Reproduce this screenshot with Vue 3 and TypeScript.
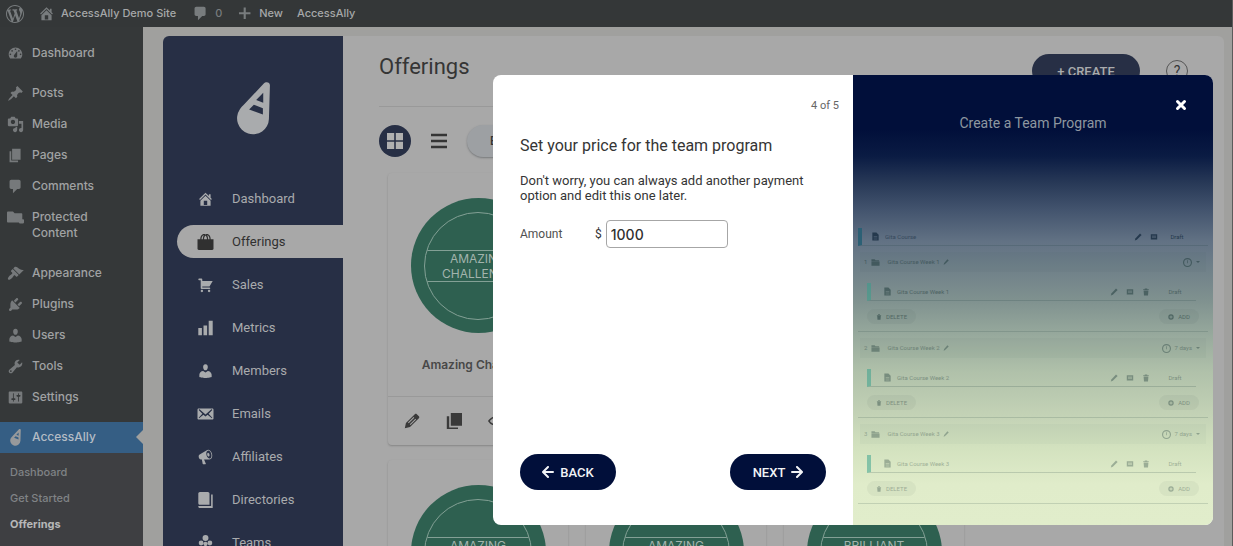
<script setup lang="ts">
import { ref } from 'vue'

interface MenuItem {
  label: string
  icon: string
  gap?: boolean
}

interface Week {
  order: number
  title: string
  delay: string
  strength: number
}

const icons: Record<string, string> = {
  wordpress:
    'M20 10c0-5.51-4.49-10-10-10C4.48 0 0 4.49 0 10c0 5.52 4.48 10 10 10 5.51 0 10-4.48 10-10zM7.78 15.37L4.37 6.22c.55-.02 1.17-.08 1.17-.08.5-.06.44-1.13-.06-1.11 0 0-1.45.11-2.37.11-.18 0-.37 0-.58-.01C4.12 2.69 6.87 1.11 10 1.11c2.33 0 4.45.87 6.05 2.34-.68-.11-1.65.39-1.65 1.58 0 .74.45 1.36.9 2.1.35.61.55 1.36.55 2.46 0 1.49-1.4 5-1.4 5l-3.03-8.37c.54-.02.82-.17.82-.17.5-.05.44-1.25-.06-1.22 0 0-1.44.12-2.38.12-.87 0-2.33-.12-2.33-.12-.5-.03-.56 1.2-.06 1.22l.92.08 1.26 3.41zM17.41 10c.24-.64.74-1.87.43-4.25.7 1.29 1.05 2.71 1.05 4.25 0 3.29-1.73 6.24-4.4 7.78.97-2.59 1.94-5.2 2.92-7.78zM6.1 18.09C3.12 16.65 1.11 13.53 1.11 10c0-1.3.23-2.48.72-3.59C3.25 10.3 4.67 14.2 6.1 18.09zm4.03-6.63l2.58 6.98c-.86.29-1.76.45-2.71.45-.79 0-1.57-.11-2.29-.33.81-2.38 1.62-4.74 2.42-7.1z',
  home: 'M16 8.5l1.53 1.53-1.06 1.06L10 4.6l-6.47 6.49-1.06-1.06L10 2.5l4 4v-2h2v4zm-6-2.46l6 5.99V18H4v-5.97zM12 17v-5H8v5h4z',
  comment: 'M5 2h9c1.1 0 2 .9 2 2v7c0 1.1-.9 2-2 2h-2l-5 5v-5H5c-1.1 0-2-.9-2-2V4c0-1.1.9-2 2-2z',
  plus: 'M17 8.500v2.500h-5.500v5.500H9V11H3.500V8.500H9V3h2.500v5.500z',
  dashboard:
    'M3.76 16h12.48c1.1-1.37 1.76-3.11 1.76-5 0-4.42-3.58-8-8-8s-8 3.58-8 8c0 1.89.66 3.63 1.76 5zM10 4c.55 0 1 .45 1 1s-.45 1-1 1-1-.45-1-1 .45-1 1-1zM6 6c.55 0 1 .45 1 1s-.45 1-1 1-1-.45-1-1 .45-1 1-1zm8 0c.55 0 1 .45 1 1s-.45 1-1 1-1-.45-1-1 .45-1 1-1zm-5.37 5.55L12 7v6c0 1.1-.9 2-2 2s-2-.9-2-2c0-.57.24-1.08.63-1.45zM4 10c.55 0 1 .45 1 1s-.45 1-1 1-1-.45-1-1 .45-1 1-1zm12 0c.55 0 1 .45 1 1s-.45 1-1 1-1-.45-1-1 .45-1 1-1z',
  pin: 'M10.44 3.02l1.82-1.82 6.36 6.35-1.83 1.82c-1.05-.68-2.48-.57-3.41.36l-.75.75c-.92.93-1.04 2.35-.35 3.41l-1.83 1.82-2.41-2.41-2.8 2.79c-.42.42-3.38 2.71-3.8 2.29s1.86-3.39 2.28-3.81l2.79-2.79L4.1 9.36l1.83-1.82c1.05.69 2.48.57 3.4-.36l.75-.75c.93-.92 1.05-2.35.36-3.41z',
  media:
    'M13 11V4c0-.55-.45-1-1-1h-1.67L9 1H5L3.67 3H2c-.55 0-1 .45-1 1v7c0 .55.45 1 1 1h10c.55 0 1-.45 1-1zM7 4.5c1.38 0 2.500 1.12 2.500 2.500S8.38 9.500 7 9.500 4.500 8.38 4.500 7 5.62 4.500 7 4.500zM14 6h5v10.500c0 1.38-1.12 2.500-2.500 2.500S14 17.88 14 16.500s1.12-2.500 2.500-2.500c.17 0 .34.02.5.05V9h-3V6zm-4 8.05V13h2v3.500c0 1.38-1.12 2.500-2.500 2.500S7 17.88 7 16.500 8.12 14 9.500 14c.17 0 .34.02.5.05z',
  pages: 'M6 15V2h10v13H6zm-1 1h8v2H3V5h2v11z',
  folder: 'M0 4c0-.6.4-1 1-1h6l2 2h8c.6 0 1 .4 1 1v6h1c.6 0 1 .4 1 1v3c0 .6-.4 1-1 1h-4c-.6 0-1-.4-1-1H1c-.6 0-1-.4-1-1z',
  brush:
    'M14.48 11.06L7.41 3.99l1.5-1.5c.5-.56 2.3-.47 3.51.32 1.21.8 1.43 1.28 2.91 2.1 1.18.64 2.45 1.26 4.45.85zm-.71.71L6.7 4.7 4.93 6.47c-.39.39-.39 1.02 0 1.41l1.06 1.06c.39.39.39 1.03 0 1.42-.6.6-1.43 1.11-2.21 1.69-.35.26-.7.53-1.01.84C1.43 14.23.4 16.08 1.4 17.07c.99 1 2.84-.03 4.18-1.36.31-.31.58-.66.85-1.02.57-.78 1.08-1.61 1.69-2.21.39-.39 1.02-.39 1.41 0l1.06 1.06c.39.39 1.02.39 1.41 0z',
  plug: 'M13.11 4.36L9.87 7.6 8 5.73l3.24-3.24c.35-.34 1.05-.2 1.56.32.52.51.66 1.21.31 1.55zm-8 1.77l.91-1.12 9.01 9.01-1.19.84c-.71.71-2.63 1.16-3.82 1.16H6.14L4.9 17.26c-.59.59-1.54.59-2.12 0-.59-.58-.59-1.53 0-2.12l1.24-1.24v-3.88c0-1.13.4-3.19 1.09-3.89zm7.26 3.97l3.24-3.24c.34-.35 1.04-.21 1.55.31.52.51.66 1.21.31 1.55l-3.24 3.25z',
  user: 'M10 9.25c-2.27 0-2.73-3.44-2.73-3.44C7 4.02 7.82 2 9.97 2c2.16 0 2.98 2.02 2.71 3.81 0 0-.41 3.44-2.68 3.44zm0 2.57L12.72 10c2.39 0 4.52 2.33 4.52 4.53v2.49s-3.65 1.13-7.24 1.13c-3.65 0-7.24-1.13-7.24-1.13v-2.49c0-2.25 1.94-4.48 4.47-4.48z',
  wrench:
    'M16.68 9.77c-1.34 1.34-3.3 1.67-4.95.99l-5.41 6.52c-.99.99-2.59.99-3.58 0s-.99-2.59 0-3.57l6.52-5.42c-.68-1.65-.35-3.61.99-4.95 1.28-1.28 3.12-1.62 4.72-1.06l-2.89 2.89 2.82 2.82 2.86-2.87c.53 1.58.18 3.39-1.08 4.65zM3.81 16.21c.4.39 1.04.39 1.43 0 .4-.4.4-1.04 0-1.43-.39-.4-1.03-.4-1.43 0-.39.39-.39 1.03 0 1.43z',
  settings:
    'M18 16V4c0-.55-.45-1-1-1H3c-.55 0-1 .45-1 1v12c0 .55.45 1 1 1h14c.55 0 1-.45 1-1zM8 11h1c.55 0 1 .45 1 1s-.45 1-1 1H8v1.5c0 .28-.22.5-.5.5s-.5-.22-.5-.5V13H6c-.55 0-1-.45-1-1s.45-1 1-1h1V5.5c0-.28.22-.5.5-.5s.5.22.5.5V11zm5-2h-1c-.55 0-1-.45-1-1s.45-1 1-1h1V5.5c0-.28.22-.5.5-.5s.5.22.5.5V7h1c.55 0 1 .45 1 1s-.45 1-1 1h-1v5.5c0 .28-.22.5-.5.5s-.5-.22-.5-.5V9z',
  bag: 'M0 6.500h3.500C3.500 3 5.500 0 8 0c.8 0 1.500.2 2 .6.5-.4 1.200-.6 2-.6 2.500 0 4.500 3 4.500 6.500H20v12c0 .8-.7 1.500-1.500 1.500h-17C.7 20 0 19.300 0 18.500zM5 6.500h1.700c0-2 .5-3.800 1.300-5C6.300 1.500 5 3.700 5 6.500zm3.200 0h3.600c0-1.900-.7-3.600-1.800-4.500-1.100.9-1.800 2.600-1.800 4.500zm5.100 0H15c0-2.800-1.300-5-3-5 .8 1.200 1.300 3 1.300 5z',
  cart: 'M6 13h9c.55 0 1 .45 1 1s-.45 1-1 1H5c-.55 0-1-.45-1-1V4H2c-.55 0-1-.45-1-1s.45-1 1-1h3c.55 0 1 .45 1 1v2h13l-4 7H6v1zm-.5 3c.83 0 1.5.67 1.5 1.5S6.33 19 5.500 19 4 18.33 4 17.5 4.67 16 5.500 16zm9 0c.83 0 1.5.67 1.5 1.5s-.67 1.5-1.5 1.5-1.5-.67-1.5-1.5.67-1.5 1.5-1.5z',
  bars: 'M19 19V1h-5v18h5zm-7 0V7H7.500v12H12zm-6.500 0v-9H1v9h4.500z',
  mail: 'M20 15.500v-11c0-.83-.67-1.500-1.500-1.500h-17C.670 3 0 3.670 0 4.500v11c0 .83.67 1.500 1.500 1.500h17c.83 0 1.500-.67 1.500-1.500zM18.200 4.400c.4.4.2.8 0 1L13.900 9.700l4.300 4.600c.2.200.2.500.1.700-.2.200-.5.200-.7.100L12.600 11 10 13l-2.600-2-5 4.100c-.2.100-.5.100-.7-.1-.1-.2-.1-.5.1-.7l4.300-4.600L1.800 5.400c-.2-.2-.4-.6 0-1s.8-.2 1.100.1L10 10.500l7.100-6c.3-.3.7-.5 1.100-.1z',
  megaphone:
    'M18.15 5.94c.46 1.62.38 3.22-.02 4.48-.42 1.28-1.26 2.18-2.3 2.48-.16.06-.26.06-.4.06-.06.02-.12.02-.18.02-.06.02-.14.02-.22.02h-6.8l2.22 5.5c.02.14-.06.26-.14.34-.08.1-.24.16-.34.16H6.95c-.1 0-.26-.06-.34-.16-.08-.08-.16-.2-.14-.34l-1-5.5H4.25l-.02-.02c-.5.06-1.08-.18-1.54-.62s-.88-1.08-1.06-1.88c-.24-.8-.2-1.56-.02-2.2.18-.62.58-1.08 1.06-1.3l.02-.02 9-5.4c.1-.06.18-.1.24-.16.06-.04.14-.08.24-.12.16-.08.28-.12.5-.18 1.04-.3 2.24.1 3.22.98s1.84 2.24 2.26 3.86zm-2.58 5.98h-.02c.4-.1.74-.34 1.04-.7.58-.7.86-1.76.86-3.04 0-.64-.1-1.3-.28-1.98-.34-1.36-1.02-2.5-1.78-3.24s-1.68-1.1-2.46-.88c-.82.22-1.4.96-1.7 2-.32 1.04-.28 2.36.06 3.72.38 1.36 1 2.5 1.8 3.24.78.74 1.62 1.1 2.48.88zm-2.54-7.08c.22-.04.42-.02.62.04.38.16.76.48 1.02 1s.42 1.2.42 1.78c0 .3-.04.56-.12.8-.18.48-.44.84-.86.94-.34.1-.8-.06-1.14-.4s-.64-.86-.78-1.5c-.18-.62-.12-1.24.02-1.72s.48-.84.82-.94z',
  book: 'M3 0h10c1.100 0 2 .9 2 2v14H3c-1.100 0-2-.9-2-2V2c0-1.100.9-2 2-2zM17 3h2v17H3c-1.100 0-2-.9-2-2v-.500h16z',
  team: 'M10 0a3.700 3.700 0 1 1 0 7.400A3.700 3.700 0 0 1 10 0zM4.500 7a3 3 0 1 1 0 6 3 3 0 0 1 0-6zm11 0a3 3 0 1 1 0 6 3 3 0 0 1 0-6zM10 8.500c1.500 0 2.500 1 2.500 2.500S11.500 14 10 14s-2.500-1.500-2.500-3S8.500 8.500 10 8.500zM0 19c0-3 1.500-5 4.500-5s4.500 2 4.500 5zm11 0c0-3 1.500-5 4.500-5s4.500 2 4.500 5z',
  pencil:
    'M13.500 1.500c.7-.7 1.800-.7 2.500 0l2.600 2.600c.7.7.7 1.800 0 2.500L7.500 17.600 1 19l1.400-6.500zM12 5L5 12l.9.900 7-7zm2.200 2.200l-7 7 .9.900 7-7z',
  copy: 'M6 0h14v16H6zM1 4h3v14h11v2H1z',
  eye: 'M10 4C5 4 1.500 7.500 0 10c1.500 2.500 5 6 10 6s8.500-3.500 10-6c-1.500-2.500-5-6-10-6zm0 1.800c3.500 0 6.200 2.200 7.700 4.200-1.500 2-4.200 4.200-7.700 4.200S3.800 12 2.300 10C3.800 8 6.500 5.800 10 5.800zM10 7a3 3 0 1 1 0 6 3 3 0 0 1 0-6z',
  trash: 'M7 1h6v2h4v2H3V3h4zM4 6h12l-1 13H5z',
  doc: 'M3 1h9l5 5v13H3zM6 9v1h8V9zm0 3v1h8v-1zm0 3v1h8v-1z',
  card: 'M2 3h16v13H2zM5 7v1.500h10V7zm0 4v1.500h10V11z',
  pen: 'M15 1l4 4L7 17l-5 2 2-6z',
  files: 'M1 3h7l2 2h8v2H1zM1 8h18v9H1z',
  clock: 'M10 0a10 10 0 1 0 0 20 10 10 0 0 0 0-20zm0 2.500a7.500 7.500 0 1 1 0 15 7.500 7.500 0 0 1 0-15zM9.200 5v6.500h1.600V5z',
  add: 'M10 1a9 9 0 1 0 0 18 9 9 0 0 0 0-18zM8.500 5h3v3.500H15v3h-3.500V15h-3v-3.500H5v-3h3.500z',
  grid: 'M0 0h9v9H0zM11 0h9v9h-9zM0 11h9v9H0zM11 11h9v9h-9z',
  list: 'M0 1h20v3H0zM0 8.500h20v3H0zM0 16h20v3H0z'
}

const logoPath =
  'M79 5C86-2 98 0 98 10L95 110A47.500 47.500 0 1 1 8 82C12 76 16 72 20 68ZM78 32V62L57 54ZM50 68L77 78V97L36 82Z'

const adminMenu: MenuItem[] = [
  { label: 'Dashboard', icon: 'dashboard' },
  { label: 'Posts', icon: 'pin', gap: true },
  { label: 'Media', icon: 'media' },
  { label: 'Pages', icon: 'pages' },
  { label: 'Comments', icon: 'comment' },
  { label: 'Protected Content', icon: 'folder' },
  { label: 'Appearance', icon: 'brush', gap: true },
  { label: 'Plugins', icon: 'plug' },
  { label: 'Users', icon: 'user' },
  { label: 'Tools', icon: 'wrench' },
  { label: 'Settings', icon: 'settings' }
]

const subMenu = ['Dashboard', 'Get Started', 'Offerings', 'Sales']

const appMenu: MenuItem[] = [
  { label: 'Dashboard', icon: 'home' },
  { label: 'Offerings', icon: 'bag' },
  { label: 'Sales', icon: 'cart' },
  { label: 'Metrics', icon: 'bars' },
  { label: 'Members', icon: 'user' },
  { label: 'Emails', icon: 'mail' },
  { label: 'Affiliates', icon: 'megaphone' },
  { label: 'Directories', icon: 'book' },
  { label: 'Teams', icon: 'team' }
]

const offerings = [
  ['Amazing', 'Challenge'],
  ['Amazing', 'Course'],
  ['Amazing', 'Program'],
  ['Brilliant', 'Course'],
  ['Amazing', 'Team'],
  ['Amazing', 'Retreat'],
  ['Brilliant', 'Program']
]

const weeks: Week[] = [
  { order: 1, title: 'Gita Course Week 1', delay: '', strength: 0.5 },
  { order: 2, title: 'Gita Course Week 2', delay: '7 days', strength: 0.38 },
  { order: 3, title: 'Gita Course Week 3', delay: '7 days', strength: 0.32 }
]

const cardActions = [
  { label: 'Edit', icon: 'pencil' },
  { label: 'Duplicate', icon: 'copy' },
  { label: 'Preview', icon: 'eye' },
  { label: 'Delete', icon: 'trash' }
]

const amount = ref('1000')
</script>

<template>
  <div class="page">
    <header class="topbar">
      <a href="#" class="wp" aria-label="WordPress"><svg class="i18" viewBox="0 0 20 20"><path :d="icons.wordpress" /></svg></a>
      <a href="#" class="site"><svg class="i17" viewBox="0 0 20 20"><path :d="icons.home" /></svg>AccessAlly Demo Site</a>
      <a href="#" class="count"><svg class="i17" viewBox="0 0 20 20"><path :d="icons.comment" /></svg>0</a>
      <a href="#" class="new"><svg class="i17" viewBox="0 0 20 20"><path :d="icons.plus" /></svg>New</a>
      <a href="#">AccessAlly</a>
    </header>

    <div class="body">
      <nav class="admin" aria-label="Admin menu">
        <a v-for="item in adminMenu" :key="item.label" href="#" class="admin-item" :class="{ gap: item.gap }">
          <svg class="i17" viewBox="0 0 20 20" fill-rule="evenodd"><path :d="icons[item.icon]" /></svg>
          <span>{{ item.label }}</span>
        </a>
        <a href="#" class="admin-item current gap">
          <svg class="i17" viewBox="0 0 98 158" fill-rule="evenodd"><path :d="logoPath" /></svg>
          <span>AccessAlly</span>
        </a>
        <div class="sub">
          <a v-for="item in subMenu" :key="item" href="#" :class="{ on: item === 'Offerings' }">{{ item }}</a>
        </div>
      </nav>

      <div class="app">
        <nav class="side" aria-label="AccessAlly">
          <svg class="logo" viewBox="0 0 98 158" fill-rule="evenodd"><path :d="logoPath" /></svg>
          <a v-for="item in appMenu" :key="item.label" href="#" class="side-item" :class="{ on: item.label === 'Offerings' }">
            <svg :class="item.icon === 'home' || item.icon === 'user' ? 'i18' : 'i16'" viewBox="0 0 20 20" fill-rule="evenodd"><path :d="icons[item.icon]" /></svg>
            <span>{{ item.label }}</span>
          </a>
        </nav>

        <main class="content">
          <div class="head">
            <h1>Offerings</h1>
            <button type="button" class="create">+ CREATE</button>
            <button type="button" class="help" aria-label="Help">?</button>
          </div>
          <div class="tools">
            <button type="button" class="view-grid" aria-label="Grid view"><svg class="i16" viewBox="0 0 20 20"><path :d="icons.grid" /></svg></button>
            <button type="button" class="view-list" aria-label="List view"><svg class="i16" viewBox="0 0 20 20"><path :d="icons.list" /></svg></button>
            <button type="button" class="filter">EDIT</button>
          </div>
          <div class="cards">
            <article v-for="offer in offerings" :key="offer.join()" class="card">
              <div class="badge">
                <div class="ring"><span>{{ offer[0].toUpperCase() }}<br />{{ offer[1].toUpperCase() }}</span></div>
              </div>
              <h2>{{ offer.join(' ') }}</h2>
              <footer>
                <button v-for="action in cardActions" :key="action.label" type="button" :aria-label="action.label">
                  <svg class="i16" viewBox="0 0 20 20" fill-rule="evenodd"><path :d="icons[action.icon]" /></svg>
                </button>
              </footer>
            </article>
          </div>
        </main>
      </div>
    </div>

    <div class="overlay">
      <section class="modal" role="dialog" aria-labelledby="step-title">
        <form class="step" @submit.prevent>
          <p class="progress">4 of 5</p>
          <h2 id="step-title">Set your price for the team program</h2>
          <p class="hint">Don't worry, you can always add another payment option and edit this one later.</p>
          <div class="field">
            <label for="amount">Amount</label>
            <span class="unit">$</span>
            <input id="amount" v-model="amount" type="text" inputmode="decimal" />
          </div>
          <div class="actions">
            <button type="button">
              <svg class="arrow" viewBox="0 0 12 12"><path d="M6 1L1 6l5 5M1.500 6H11" /></svg>BACK
            </button>
            <button type="submit">
              NEXT<svg class="arrow" viewBox="0 0 12 12"><path d="M6 1l5 5-5 5M10.500 6H1" /></svg>
            </button>
          </div>
        </form>

        <aside class="preview">
          <button type="button" class="close" aria-label="Close">
            <svg viewBox="0 0 12 12"><path d="M2.500 2.500l7 7M9.500 2.500l-7 7" /></svg>
          </button>
          <h3>Create a Team Program</h3>
          <div class="outline">
            <div class="row course">
              <svg class="i9" viewBox="0 0 20 20"><path :d="icons.doc" /></svg>
              <span class="name">Gita Course</span>
              <svg class="i8" viewBox="0 0 20 20"><path :d="icons.pen" /></svg>
              <svg class="i8" viewBox="0 0 20 20" fill-rule="evenodd"><path :d="icons.card" /></svg>
              <span class="state">Draft</span>
            </div>
            <div v-for="week in weeks" :key="week.order" class="week">
              <div class="week-head">
                <span class="ink" :style="{ opacity: week.strength }">
                  <span>{{ week.order }}</span>
                  <svg class="i9" viewBox="0 0 20 20"><path :d="icons.files" /></svg>
                  <span class="name">{{ week.title }} <svg class="i6" viewBox="0 0 20 20"><path :d="icons.pen" /></svg></span>
                  <svg class="i9" viewBox="0 0 20 20" fill-rule="evenodd"><path :d="icons.clock" /></svg>
                  <span v-if="week.delay">{{ week.delay }}</span>
                  <i class="caret"></i>
                </span>
              </div>
              <div class="row lesson">
                <span class="ink" :style="{ opacity: week.strength }">
                  <svg class="i9" viewBox="0 0 20 20" fill-rule="evenodd"><path :d="icons.doc" /></svg>
                  <span class="name">{{ week.title }}</span>
                  <svg class="i8" viewBox="0 0 20 20"><path :d="icons.pen" /></svg>
                  <svg class="i8" viewBox="0 0 20 20" fill-rule="evenodd"><path :d="icons.card" /></svg>
                  <svg class="i8" viewBox="0 0 20 20"><path :d="icons.trash" /></svg>
                  <span class="state">Draft</span>
                </span>
              </div>
              <div class="week-foot">
                <span class="chip"><span class="ink" :style="{ opacity: week.strength }"><svg class="i6" viewBox="0 0 20 20"><path :d="icons.trash" /></svg>DELETE</span></span>
                <span class="chip"><span class="ink" :style="{ opacity: week.strength }"><svg class="i6" viewBox="0 0 20 20" fill-rule="evenodd"><path :d="icons.add" /></svg>ADD</span></span>
              </div>
            </div>
          </div>
        </aside>
      </section>
    </div>
  </div>
</template>

<style>
body {
  margin: 0;
}
</style>

<style scoped>
.page,
.page * {
  box-sizing: border-box;
}
.page {
  position: relative;
  display: flex;
  flex-direction: column;
  height: 100vh;
  overflow: hidden;
  background: #a0a09e;
  border-right: 1px solid #5c5c5c;
  font-family: Roboto, sans-serif;
  color: #353535;
}
a {
  color: inherit;
  text-decoration: none;
}
button {
  padding: 0;
  border: 0;
  background: none;
  color: inherit;
  font: inherit;
}
h1,
h2,
h3,
p {
  margin: 0;
}
svg {
  display: block;
  flex: none;
  fill: currentColor;
}
.i18 { width: 18px; height: 18px; }
.i17 { width: 17px; height: 17px; }
.i16 { width: 16px; height: 16px; }
.i9 { width: 9px; height: 9px; }
.i8 { width: 8px; height: 8px; }
.i6 { width: 6px; height: 6px; }

.topbar {
  display: flex;
  align-items: center;
  gap: 14px;
  height: 27px;
  flex: none;
  padding-left: 6px;
  background: #343738;
  color: #a6a8a9;
  font: 500 11px/27px Inter, sans-serif;
}
.topbar a {
  display: flex;
  align-items: center;
  gap: 6px;
}
.topbar svg {
  fill: #787c7e;
}
.topbar .site {
  margin-right: 2px;
}
.topbar .count {
  color: #787c7e;
}

.body {
  display: flex;
  flex: 1;
  min-height: 0;
}
.admin {
  width: 143px;
  flex: none;
  padding-top: 11px;
  background: #353839;
  color: #a0a2a3;
  font: 500 12px/16px Inter, sans-serif;
}
.admin-item {
  display: flex;
  align-items: flex-start;
  gap: 8px;
  padding: 7px 40px 7px 7px;
}
.admin-item span {
  padding-bottom: 1px;
}
.admin-item.gap {
  margin-top: 9px;
}
.admin-item svg {
  fill: #76797b;
}
.admin-item.current {
  position: relative;
  padding-right: 7px;
  background: #355e84;
  color: #b4bcc4;
}
.admin-item.current::after {
  content: '';
  position: absolute;
  right: 0;
  top: 8px;
  border: 7px solid transparent;
  border-left-width: 0;
  border-right-color: #a0a09e;
}
.admin-item.current svg {
  fill: #97999b;
}
.sub {
  height: 100%;
  padding-top: 6px;
  background: #3e3f42;
  color: #808386;
  font-size: 11px;
  line-height: 26px;
}
.sub a {
  display: block;
  padding-left: 10px;
}
.sub .on {
  color: #b6b7b8;
  font-weight: 700;
}

.app {
  display: flex;
  flex: 1;
  min-width: 0;
  margin: 9px 8px 0 20px;
  background: #a8a8a8;
  border-radius: 6px 6px 0 0;
  overflow: hidden;
}
.side {
  display: flex;
  flex-direction: column;
  gap: 10px;
  width: 180px;
  flex: none;
  padding: 46px 0 0 14px;
  background: #272f45;
  color: #a9abad;
  font-size: 13px;
}
.logo {
  width: 33px;
  height: 53px;
  margin: 0 0 37px 60px;
}
.side-item {
  display: flex;
  align-items: center;
  height: 33px;
  flex: none;
  padding-left: 20px;
  border-radius: 17px 0 0 17px;
}
.side-item svg {
  width: 17px;
}
.side-item span {
  padding-left: 18px;
}
.side-item.on {
  background: #a8a8a8;
  color: #303030;
}

.content {
  flex: 1;
  min-width: 0;
  padding: 18px 36px 0;
}
.head {
  display: flex;
  align-items: flex-start;
  padding-bottom: 18px;
  border-bottom: 1px solid #999;
}
.head h1 {
  margin-right: auto;
  font-size: 22px;
  font-weight: 400;
  line-height: 25px;
}
.create {
  width: 108px;
  height: 34px;
  border-radius: 17px;
  background: #272f45;
  color: #a9abad;
  font-size: 13px;
  font-weight: 500;
}
.help {
  width: 22px;
  height: 22px;
  margin: 6px 0 0 26px;
  border: 1px solid #555;
  border-radius: 50%;
  font-size: 14px;
  line-height: 20px;
}
.tools {
  display: flex;
  align-items: center;
  gap: 20px;
  padding: 18px 0 16px;
}
.view-grid {
  display: grid;
  place-items: center;
  width: 32px;
  height: 32px;
  border-radius: 50%;
  background: #272f45;
  color: #b0b0b0;
}
.filter {
  height: 32px;
  padding: 0 23px;
  border-radius: 16px;
  background: #9da0a3;
  box-shadow: 0 1px 2px #77797b;
  font-size: 12px;
  font-weight: 500;
}
.cards {
  display: grid;
  grid-template-columns: repeat(auto-fill, 180px);
  gap: 15px 18px;
  padding-left: 9px;
}
.card {
  border-radius: 4px;
  box-shadow: 0 1px 2px #858585;
}
.badge {
  display: grid;
  place-items: center;
  width: 135px;
  height: 135px;
  margin: 25px auto 0;
  border-radius: 50%;
  background: #2e6050;
}
.ring {
  display: grid;
  align-items: center;
  width: 108px;
  height: 108px;
  border: 1px solid #83a095;
  border-radius: 50%;
  overflow: hidden;
}
.ring span {
  border: solid #83a095;
  border-width: 1px 0;
  color: #a3b4ad;
  font: 12px/15px Inter, sans-serif;
  text-align: center;
}
.card h2 {
  padding: 24px 0 23px;
  font: 600 12px/16px Inter, sans-serif;
  text-align: center;
  color: #484848;
}
.card footer {
  display: flex;
  gap: 26px;
  padding: 16px;
  border-top: 1px solid #999;
  color: #3a3a3a;
}

.overlay {
  position: absolute;
  inset: 0;
  display: flex;
  align-items: flex-start;
  justify-content: flex-end;
  padding: 75px 19px 0;
}
.modal {
  display: grid;
  grid-template-columns: 1fr 1fr;
  width: 720px;
  min-height: 450px;
  border-radius: 8px;
  background: #fff;
  overflow: hidden;
}
.step {
  display: flex;
  flex-direction: column;
  padding: 22px 27px 35px;
}
.progress {
  align-self: flex-end;
  margin-right: -13px;
  color: #666;
  font-size: 11px;
  line-height: 17px;
}
.step h2 {
  margin-top: 22px;
  font-size: 16px;
  font-weight: 400;
  line-height: 20px;
}
.hint {
  margin-top: 17px;
  font-size: 13px;
  line-height: 15px;
}
.field {
  display: flex;
  align-items: center;
  margin-top: 17px;
  font-size: 12px;
}
.field label {
  width: 75px;
  color: #505050;
}
.field input {
  width: 122px;
  height: 28px;
  margin-left: 4px;
  padding: 0 4px;
  border: 1px solid #a6a6a6;
  border-radius: 4px;
  color: #303030;
  font: 500 14px/16px Inter, sans-serif;
}
.actions {
  display: flex;
  justify-content: space-between;
  margin-top: auto;
}
.actions button {
  display: flex;
  align-items: center;
  justify-content: center;
  gap: 6px;
  width: 96px;
  height: 36px;
  border-radius: 18px;
  background: #010f3a;
  color: #f2f3f6;
  font-size: 13px;
  font-weight: 500;
}
.arrow {
  width: 12px;
  height: 12px;
  fill: none;
  stroke: currentColor;
  stroke-width: 2;
  stroke-linecap: round;
  stroke-linejoin: round;
}

.preview {
  position: relative;
  display: flex;
  flex-direction: column;
  padding: 38px 5px 21px;
  background: linear-gradient(
    #010f3a 0,
    #010f3a 12%,
    #0a1b43 18%,
    #283957 24%,
    #43546e 30%,
    #627284 37%,
    #7f918f 50%,
    #98aa9d 58%,
    #b0c1aa 66%,
    #c2d1b5 75%,
    #d3e2bf 83%,
    #e0ecca 91%,
    #e1edcb 100%
  );
}
.preview h3 {
  color: #8e97a0;
  font-size: 14px;
  font-weight: 400;
  line-height: 20px;
  text-align: center;
}
.close {
  position: absolute;
  top: 24px;
  right: 26px;
}
.close svg {
  width: 12px;
  height: 12px;
  fill: none;
  stroke: #fff;
  stroke-width: 3;
  stroke-linecap: round;
}
.outline {
  margin-top: auto;
  color: #1c3838;
  font-size: 6px;
  line-height: 8px;
}
.ink {
  display: flex;
  align-items: center;
  flex: 1;
  gap: 4px;
}
.name {
  display: flex;
  align-items: center;
  gap: 3px;
  margin-right: auto;
}
.row {
  display: flex;
  align-items: center;
  height: 18px;
  border-left: 4px solid #3d8085;
  border-bottom: 1px solid rgba(30, 60, 60, 0.18);
}
.course {
  gap: 8px;
  padding: 0 20px 0 9px;
  border-left-color: #2c6075;
  color: #25394d;
}
.course .name {
  margin-left: -3px;
  opacity: 0.7;
}
.state {
  width: 22px;
  text-align: center;
}
.week {
  padding: 6px 2px 7px;
  border-bottom: 1px solid rgba(30, 60, 60, 0.16);
}
.week-head {
  display: flex;
  height: 20px;
  padding: 0 6px 0 4px;
  background: rgba(30, 60, 60, 0.03);
}
.week-head .name {
  margin-left: 3px;
}
.caret {
  border: 2px solid transparent;
  border-top-color: currentColor;
  border-bottom-width: 0;
}
.lesson {
  margin: 11px 10px 8px 7px;
  padding: 0 10px 0 12px;
  border-left-color: rgba(50, 160, 140, 0.5);
}
.lesson .ink {
  gap: 8px;
}
.lesson .name {
  margin-left: -3px;
}
.lesson .state {
  margin-left: 6px;
}
.week-foot {
  display: flex;
  justify-content: space-between;
  margin: 0 7px;
}
.chip {
  display: flex;
  height: 15px;
  padding: 0 9px;
  border-radius: 8px;
  background: rgba(30, 60, 60, 0.05);
}
</style>
